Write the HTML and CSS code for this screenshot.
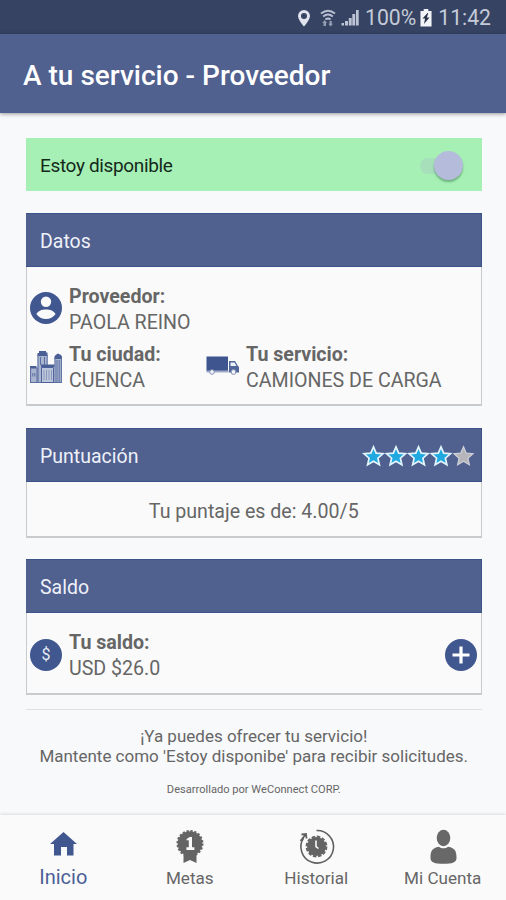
FILE: index.html
```html
<!DOCTYPE html>
<html lang="es">
<head>
<meta charset="utf-8">
<title>A tu servicio - Proveedor</title>
<link rel="stylesheet" href="styles.css">
</head>
<body>
<div class="status">
  <svg class="pin" width="14" height="18" viewBox="0 0 14 18"><path fill="#dfe3ee" fill-rule="evenodd" d="M7 1a6 6 0 0 0-6 6c0 4 6 10.500 6 10.500S13 11 13 7a6 6 0 0 0-6-6zm0 3a3 3 0 1 1 0 6 3 3 0 0 1 0-6z"/></svg>
  <svg class="wifi" width="16" height="18" viewBox="0 0 16 18"><g fill="none" stroke="#b9c0d0" stroke-width="1.900"><path d="M1 4.500q7-5.500 14 0M3.200 7.600q4.800-4 9.600 0M5.400 10.500q2.600-2 5.200 0"/></g><path fill="#939cb1" d="M3.500 17v-3H2.300L4.700 11l2.400 3H6v3zM9.500 12h2.300v2.700H13L10.700 17.500 8.300 14.700h1.200z"/></svg>
  <svg class="signal" width="18" height="17" viewBox="0 0 18 17"><path fill="#bdc4d3" d="M.500 14H3v2.500H.500zM4 12h3v4.500H4zM7.800 9h2.900v7.500H7.800zM11.300 5h2.900v11.500h-2.900zM15 1h2.700v15.500H15z"/></svg>
  <span class="percent">100%</span>
  <svg class="battery" width="12" height="18" viewBox="0 0 13 18" preserveAspectRatio="none"><path fill="#f2f4f8" d="M4 0h5v2h3.500v15.500H.500V2H4z"/><path fill="#273248" d="M8.200 4 2.700 9.600h2.800L4.300 15l6-6.600H7.400L9 4z"/></svg>
  <span class="clock">11:42</span>
</div>
<header class="appbar"><h1>A tu servicio - Proveedor</h1></header>
<main>
  <section class="available">
    <span class="label">Estoy disponible</span>
    <span class="switch"><i class="track"></i><i class="thumb"></i></span>
  </section>

  <section class="card card-data">
    <h2><span>Datos</span></h2>
    <div class="body data">
      <div class="field">
        <svg class="person" width="32" height="32" viewBox="0 0 32 32"><circle cx="16" cy="16" r="16" fill="#40578f"/><circle cx="16" cy="9.800" r="5.200" fill="#fafafa"/><path fill="#fafafa" d="M6.400 21.900C8 18.800 12 17.400 16 17.400s8 1.400 9.600 4.500a11.500 11.500 0 0 1-19.200 0z"/></svg>
        <div><b>Proveedor:</b><span>PAOLA REINO</span></div>
      </div>
      <div class="row">
        <div class="field city">
          <svg width="32" height="34" viewBox="0 0 32 34">
            <path fill="#a9b4cf" d="M7.500 5h10V33h-10zM24.500 6H32v27h-7.500zM0 17h7.500v16H0z"/>
            <path fill="#4a5f96" d="M9 1h7v1.500h1.500V6h-10V3H9zM25.500 5 28 3.500 31 5l1 2v2h-7.500V7zM0 16h6.500v2.500H0zM11 14.500h13.500V17H11z"/>
            <path stroke="#5b6fa2" stroke-width="1" fill="none" d="M8 5v28M10.500 7v8M14.500 7v8M17.200 5v10M25 8v24M27 10v22M29.200 10v22M31.400 8v25M.600 18v15M2.800 23v3.500M4.800 23v3.500M7 18v15M0 32.500h32"/>
            <path fill="#bcc5da" stroke="#4d629a" d="M11.500 17.500h12v15h-12z"/>
            <path stroke="#8b99bc" stroke-width="1" fill="none" d="M14 20v10M16.500 20v10M19 20v10M21.500 20v10"/>
          </svg>
          <div><b>Tu ciudad:</b><span>CUENCA</span></div>
        </div>
        <div class="field service">
          <svg width="34" height="20" viewBox="0 0 34 20">
            <path fill="#3e558f" d="M.500.500H22V15H.500z"/><path fill="#a0abc6" d="M.500 14.500h22V16.500H.500z"/>
            <path fill="#50659a" d="M23 5h6l3 5 1 1v5.500H23z"/><path fill="#eef1f7" d="M24.500 6.500h4L30.500 10h-6z"/>
            <g fill="#f4f5f8" stroke="#8290b4" stroke-width="1"><circle cx="6" cy="16" r="2.300"/><circle cx="27.500" cy="16" r="2.400"/></g>
          </svg>
          <div><b>Tu servicio:</b><span>CAMIONES DE CARGA</span></div>
        </div>
      </div>
    </div>
  </section>

  <section class="card card-score">
    <h2><span>Puntuación</span>
      <svg width="112" height="22" viewBox="0 0 112 22">
        <defs><path id="star" d="M10.500 1.800 13.200 8.100 20 8.700 14.900 13.200 16.400 19.800 10.500 16.300 4.600 19.800 6.100 13.200 1 8.700 7.800 8.100z"/></defs>
        <g fill="#20a9e1" stroke="#e4f4fc" stroke-width="1.700"><use href="#star"/><use href="#star" x="22.500"/><use href="#star" x="45"/><use href="#star" x="67.500"/></g>
        <use href="#star" x="90" fill="#b5b5ba" stroke="#ced0d8" stroke-width="1.200"/>
      </svg>
    </h2>
    <p class="body score"><span>Tu puntaje es de: 4.00/5</span></p>
  </section>

  <section class="card card-balance">
    <h2><span>Saldo</span></h2>
    <div class="body balance">
      <div class="field">
        <span class="coin">$</span>
        <div><b>Tu saldo:</b><span>USD $26.0</span></div>
      </div>
      <svg class="add" width="32" height="32" viewBox="0 0 32 32"><circle cx="16" cy="16" r="16" fill="#40578f"/><path stroke="#fff" stroke-width="3.200" d="M7.500 16h17M16 7.500v17"/></svg>
    </div>
  </section>

  <hr>
  <p class="notice"><span>¡Ya puedes ofrecer tu servicio!</span><br><span>Mantente como 'Estoy disponibe' para recibir solicitudes.</span></p>
  <p class="credit"><span>Desarrollado por WeConnect CORP.</span></p>
</main>
<nav>
  <a class="active">
    <svg width="36" height="36" viewBox="0 0 36 36"><path fill="#40578f" d="M18.500 6 32 18H28.500v11.500h-6.500V21h-6v8.500H9V18H5z"/></svg>
    <span>Inicio</span>
  </a>
  <a>
    <svg width="36" height="36" viewBox="0 0 36 36"><path fill="#646464" d="M11.500 26v11l6.500-3 6.500 3V26z"/><circle cx="18" cy="17.500" r="12.300" fill="#646464"/><circle cx="18" cy="17.500" r="12.600" fill="none" stroke="#646464" stroke-width="1.800" stroke-dasharray="2.300 1.658"/><path fill="#fafafa" d="M14.500 13.200 17.500 11H20v10.300h2.400V24h-8v-2.700h2.400v-7h-2.300z"/></svg>
    <span>Metas</span>
  </a>
  <a>
    <svg width="36" height="36" viewBox="0 0 36 36"><path fill="none" stroke="#616161" stroke-width="1.600" d="M18.500 4.500a16.300 16.300 0 1 1-13 7.500"/><path fill="none" stroke="#616161" stroke-width="1.800" d="M3.500 8.500 8 8l.500 4.500M8 8l-5.500 7"/><circle cx="18.500" cy="20.500" r="9.500" fill="#646464"/><circle cx="18.500" cy="20.500" r="9.900" fill="none" stroke="#646464" stroke-width="2" stroke-dasharray="3.500 1.683"/><path fill="none" stroke="#fafafa" stroke-width="1.600" d="M18 14.500V20.500l2.500 2"/></svg>
    <span>Historial</span>
  </a>
  <a>
    <svg width="36" height="36" viewBox="0 0 36 36"><ellipse cx="18.500" cy="12" rx="6.800" ry="8.300" fill="#686868"/><path fill="#686868" d="M5.500 32c0-6 1-10 8.500-11.200 2.500 2 6.500 2 9 0C30.500 22 31.500 26 31.500 32c0 4.500-4 5.800-13 5.800S5.500 36.500 5.500 32z"/></svg>
    <span>Mi Cuenta</span>
  </a>
</nav>
</body>
</html>
```

FILE: styles.css
```css
* { box-sizing: border-box; }
body {
  margin: 0;
  height: 900px;
  display: flex;
  flex-direction: column;
  overflow: hidden;
  background: #f8f9fb;
  color: #666;
  font: 19.600px/26px Roboto, sans-serif;
}
h1, h2, p { margin: 0; font-weight: 400; }
svg { display: block; flex: none; overflow: visible; }
span, b { white-space: nowrap; }

.status {
  height: 34px;
  flex: none;
  display: flex;
  align-items: center;
  justify-content: flex-end;
  padding: 1px 15px 0 0;
  background: #364362;
  color: #c5cbd8;
  font-size: 21.200px;
}
.pin { margin: 0 9px 0 0; }
.wifi { margin-right: 5px; }
.signal { margin-right: 6px; }
.battery { margin: 0 6px 0 4px; }

.appbar {
  height: 79px;
  flex: none;
  display: flex;
  align-items: center;
  padding: 4px 23px 0;
  background: #50608f;
  color: #fff;
  box-shadow: 0 1px 4px rgba(0, 0, 0, .4);
}
.appbar h1 { font-size: 28px; font-weight: 500; white-space: nowrap; }

main { flex: 1; padding: 25px 24.500px 0 26px; }

.available {
  height: 53px;
  display: flex;
  align-items: center;
  justify-content: space-between;
  padding: 2px 19px 0 14px;
  background: #a6f0b5;
  color: #14291a;
}
.label { font-size: 19px; letter-spacing: -.350px; }
.switch { display: flex; align-items: center; }
.track { width: 26px; height: 16px; margin-right: -12px; border-radius: 8px; background: #a6dfba; }
.thumb { width: 29px; height: 29px; border-radius: 50%; background: #b5bcdb; box-shadow: 0 2px 2px rgba(40, 100, 60, .45); }

.card { border: 1px solid #c9cacc; border-top: 0; border-bottom-width: 2px; background: #fafafa; }
.card h2 {
  height: 54px;
  margin: 0 -1px;
  display: flex;
  align-items: center;
  justify-content: space-between;
  padding: 3px 6px 0 14px;
  background: #50608f;
  border: 1px solid #3d5289;
  border-width: 1px 1px 1px 0;
  color: #eef1f9;
  font-size: 19.500px;
}
.card h2 svg { margin-top: -2px; }
.card-data { height: 193px; margin-top: 22px; }
.card-score { height: 110px; margin-top: 22px; }
.card-balance { height: 136px; margin-top: 21px; }

.field { display: flex; align-items: center; gap: 7px; }
.field > div { display: flex; flex-direction: column; }
.field b { font-weight: 700; }
.data { padding: 17px 3px 0; }
.data > .field { height: 52px; }
.person { margin-top: -4px; }
.row { display: grid; grid-template-columns: 176px 1fr; padding-top: 6px; }
.city svg { margin-top: -2px; }
.service { gap: 6px; }
.service svg { margin-top: -5px; }
.score { height: 54px; display: flex; align-items: center; justify-content: center; padding-top: 5px; }
.balance { display: flex; align-items: center; justify-content: space-between; height: 80px; padding: 6px 4px 0 3px; }
.add { margin-top: -3px; }
.coin {
  width: 32px;
  height: 32px;
  margin-top: -3px;
  border-radius: 50%;
  background: #40578f;
  color: #e7ebf4;
  font-size: 16px;
  line-height: 32px;
  text-align: center;
}

hr { margin: 14px 0 0; border: 0; border-top: 1px solid #dfe0e2; }
.notice { margin-top: 16px; text-align: center; font-size: 17px; line-height: 20px; }
.credit { margin-top: 15px; text-align: center; font-size: 11.100px; line-height: 18px; }

nav {
  height: 85px;
  flex: none;
  display: grid;
  grid-template-columns: repeat(4, 1fr);
  background: #fafafa;
  box-shadow: 0 -1px 3px rgba(0, 0, 0, .12);
}
nav a { display: flex; flex-direction: column; align-items: center; padding-top: 11px; font-size: 17.100px; line-height: 24px; }
nav span { margin-top: 4px; }
nav .active { color: #4b5f97; font-size: 20px; }
nav .active span { margin-top: 3px; }
```
